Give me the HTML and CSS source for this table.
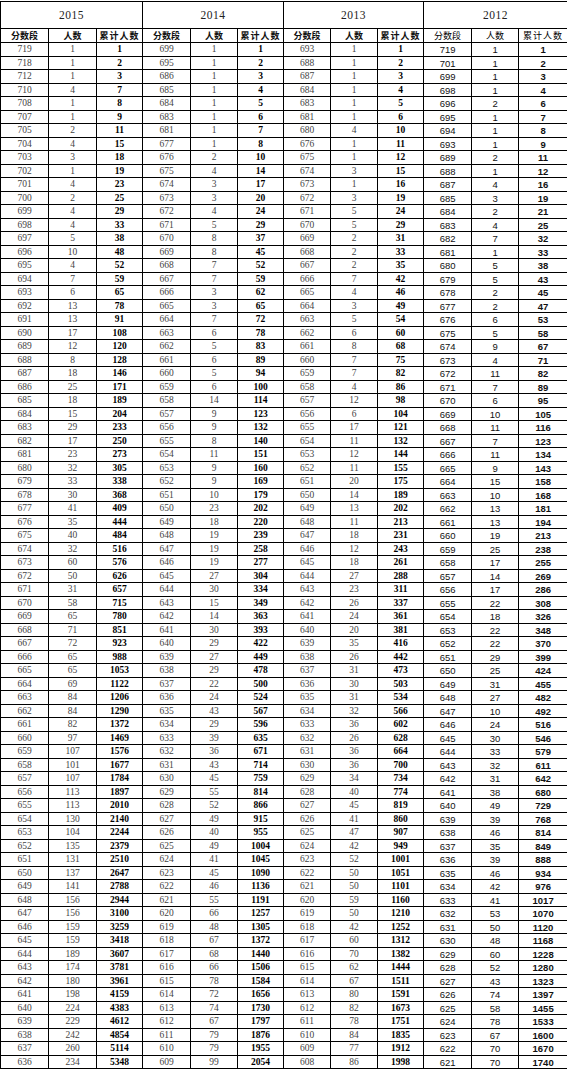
FILE: index.html
```html
<!DOCTYPE html>
<html lang="zh-CN">
<head>
<meta charset="utf-8">
<title>2012-2015 分数段统计</title>
<link rel="stylesheet" href="styles.css">
</head>
<body>
<table class="scores">
<colgroup>
<col class="w48"><col class="w48"><col class="w46">
<col class="w48"><col class="w47"><col class="w46">
<col class="w47"><col class="w47"><col class="w46">
<col class="w48"><col class="w47"><col class="w49">
</colgroup>
<thead>
<tr class="year-row"><th colspan="3">2015</th><th colspan="3">2014</th><th colspan="3">2013</th><th colspan="3" class="y2012">2012</th></tr>
<tr class="label-row">
<th>分数段</th><th>人数</th><th class="cum">累计人数</th>
<th>分数段</th><th>人数</th><th class="cum">累计人数</th>
<th>分数段</th><th>人数</th><th class="cum">累计人数</th>
<th class="light">分数段</th><th class="light">人数</th><th class="cum light">累计人数</th>
</tr>
</thead>
<tbody>
<tr><td>719</td><td>1</td><td>1</td><td>699</td><td>1</td><td>1</td><td>693</td><td>1</td><td>1</td><td>719</td><td>1</td><td>1</td></tr>
<tr><td>718</td><td>1</td><td>2</td><td>695</td><td>1</td><td>2</td><td>688</td><td>1</td><td>2</td><td>701</td><td>1</td><td>2</td></tr>
<tr><td>712</td><td>1</td><td>3</td><td>686</td><td>1</td><td>3</td><td>687</td><td>1</td><td>3</td><td>699</td><td>1</td><td>3</td></tr>
<tr><td>710</td><td>4</td><td>7</td><td>685</td><td>1</td><td>4</td><td>684</td><td>1</td><td>4</td><td>698</td><td>1</td><td>4</td></tr>
<tr><td>708</td><td>1</td><td>8</td><td>684</td><td>1</td><td>5</td><td>683</td><td>1</td><td>5</td><td>696</td><td>2</td><td>6</td></tr>
<tr><td>707</td><td>1</td><td>9</td><td>683</td><td>1</td><td>6</td><td>681</td><td>1</td><td>6</td><td>695</td><td>1</td><td>7</td></tr>
<tr><td>705</td><td>2</td><td>11</td><td>681</td><td>1</td><td>7</td><td>680</td><td>4</td><td>10</td><td>694</td><td>1</td><td>8</td></tr>
<tr><td>704</td><td>4</td><td>15</td><td>677</td><td>1</td><td>8</td><td>676</td><td>1</td><td>11</td><td>693</td><td>1</td><td>9</td></tr>
<tr><td>703</td><td>3</td><td>18</td><td>676</td><td>2</td><td>10</td><td>675</td><td>1</td><td>12</td><td>689</td><td>2</td><td>11</td></tr>
<tr><td>702</td><td>1</td><td>19</td><td>675</td><td>4</td><td>14</td><td>674</td><td>3</td><td>15</td><td>688</td><td>1</td><td>12</td></tr>
<tr><td>701</td><td>4</td><td>23</td><td>674</td><td>3</td><td>17</td><td>673</td><td>1</td><td>16</td><td>687</td><td>4</td><td>16</td></tr>
<tr><td>700</td><td>2</td><td>25</td><td>673</td><td>3</td><td>20</td><td>672</td><td>3</td><td>19</td><td>685</td><td>3</td><td>19</td></tr>
<tr><td>699</td><td>4</td><td>29</td><td>672</td><td>4</td><td>24</td><td>671</td><td>5</td><td>24</td><td>684</td><td>2</td><td>21</td></tr>
<tr><td>698</td><td>4</td><td>33</td><td>671</td><td>5</td><td>29</td><td>670</td><td>5</td><td>29</td><td>683</td><td>4</td><td>25</td></tr>
<tr><td>697</td><td>5</td><td>38</td><td>670</td><td>8</td><td>37</td><td>669</td><td>2</td><td>31</td><td>682</td><td>7</td><td>32</td></tr>
<tr><td>696</td><td>10</td><td>48</td><td>669</td><td>8</td><td>45</td><td>668</td><td>2</td><td>33</td><td>681</td><td>1</td><td>33</td></tr>
<tr><td>695</td><td>4</td><td>52</td><td>668</td><td>7</td><td>52</td><td>667</td><td>2</td><td>35</td><td>680</td><td>5</td><td>38</td></tr>
<tr><td>694</td><td>7</td><td>59</td><td>667</td><td>7</td><td>59</td><td>666</td><td>7</td><td>42</td><td>679</td><td>5</td><td>43</td></tr>
<tr><td>693</td><td>6</td><td>65</td><td>666</td><td>3</td><td>62</td><td>665</td><td>4</td><td>46</td><td>678</td><td>2</td><td>45</td></tr>
<tr><td>692</td><td>13</td><td>78</td><td>665</td><td>3</td><td>65</td><td>664</td><td>3</td><td>49</td><td>677</td><td>2</td><td>47</td></tr>
<tr><td>691</td><td>13</td><td>91</td><td>664</td><td>7</td><td>72</td><td>663</td><td>5</td><td>54</td><td>676</td><td>6</td><td>53</td></tr>
<tr><td>690</td><td>17</td><td>108</td><td>663</td><td>6</td><td>78</td><td>662</td><td>6</td><td>60</td><td>675</td><td>5</td><td>58</td></tr>
<tr><td>689</td><td>12</td><td>120</td><td>662</td><td>5</td><td>83</td><td>661</td><td>8</td><td>68</td><td>674</td><td>9</td><td>67</td></tr>
<tr><td>688</td><td>8</td><td>128</td><td>661</td><td>6</td><td>89</td><td>660</td><td>7</td><td>75</td><td>673</td><td>4</td><td>71</td></tr>
<tr><td>687</td><td>18</td><td>146</td><td>660</td><td>5</td><td>94</td><td>659</td><td>7</td><td>82</td><td>672</td><td>11</td><td>82</td></tr>
<tr><td>686</td><td>25</td><td>171</td><td>659</td><td>6</td><td>100</td><td>658</td><td>4</td><td>86</td><td>671</td><td>7</td><td>89</td></tr>
<tr><td>685</td><td>18</td><td>189</td><td>658</td><td>14</td><td>114</td><td>657</td><td>12</td><td>98</td><td>670</td><td>6</td><td>95</td></tr>
<tr><td>684</td><td>15</td><td>204</td><td>657</td><td>9</td><td>123</td><td>656</td><td>6</td><td>104</td><td>669</td><td>10</td><td>105</td></tr>
<tr><td>683</td><td>29</td><td>233</td><td>656</td><td>9</td><td>132</td><td>655</td><td>17</td><td>121</td><td>668</td><td>11</td><td>116</td></tr>
<tr><td>682</td><td>17</td><td>250</td><td>655</td><td>8</td><td>140</td><td>654</td><td>11</td><td>132</td><td>667</td><td>7</td><td>123</td></tr>
<tr><td>681</td><td>23</td><td>273</td><td>654</td><td>11</td><td>151</td><td>653</td><td>12</td><td>144</td><td>666</td><td>11</td><td>134</td></tr>
<tr><td>680</td><td>32</td><td>305</td><td>653</td><td>9</td><td>160</td><td>652</td><td>11</td><td>155</td><td>665</td><td>9</td><td>143</td></tr>
<tr><td>679</td><td>33</td><td>338</td><td>652</td><td>9</td><td>169</td><td>651</td><td>20</td><td>175</td><td>664</td><td>15</td><td>158</td></tr>
<tr><td>678</td><td>30</td><td>368</td><td>651</td><td>10</td><td>179</td><td>650</td><td>14</td><td>189</td><td>663</td><td>10</td><td>168</td></tr>
<tr><td>677</td><td>41</td><td>409</td><td>650</td><td>23</td><td>202</td><td>649</td><td>13</td><td>202</td><td>662</td><td>13</td><td>181</td></tr>
<tr><td>676</td><td>35</td><td>444</td><td>649</td><td>18</td><td>220</td><td>648</td><td>11</td><td>213</td><td>661</td><td>13</td><td>194</td></tr>
<tr><td>675</td><td>40</td><td>484</td><td>648</td><td>19</td><td>239</td><td>647</td><td>18</td><td>231</td><td>660</td><td>19</td><td>213</td></tr>
<tr><td>674</td><td>32</td><td>516</td><td>647</td><td>19</td><td>258</td><td>646</td><td>12</td><td>243</td><td>659</td><td>25</td><td>238</td></tr>
<tr><td>673</td><td>60</td><td>576</td><td>646</td><td>19</td><td>277</td><td>645</td><td>18</td><td>261</td><td>658</td><td>17</td><td>255</td></tr>
<tr><td>672</td><td>50</td><td>626</td><td>645</td><td>27</td><td>304</td><td>644</td><td>27</td><td>288</td><td>657</td><td>14</td><td>269</td></tr>
<tr><td>671</td><td>31</td><td>657</td><td>644</td><td>30</td><td>334</td><td>643</td><td>23</td><td>311</td><td>656</td><td>17</td><td>286</td></tr>
<tr><td>670</td><td>58</td><td>715</td><td>643</td><td>15</td><td>349</td><td>642</td><td>26</td><td>337</td><td>655</td><td>22</td><td>308</td></tr>
<tr><td>669</td><td>65</td><td>780</td><td>642</td><td>14</td><td>363</td><td>641</td><td>24</td><td>361</td><td>654</td><td>18</td><td>326</td></tr>
<tr><td>668</td><td>71</td><td>851</td><td>641</td><td>30</td><td>393</td><td>640</td><td>20</td><td>381</td><td>653</td><td>22</td><td>348</td></tr>
<tr><td>667</td><td>72</td><td>923</td><td>640</td><td>29</td><td>422</td><td>639</td><td>35</td><td>416</td><td>652</td><td>22</td><td>370</td></tr>
<tr><td>666</td><td>65</td><td>988</td><td>639</td><td>27</td><td>449</td><td>638</td><td>26</td><td>442</td><td>651</td><td>29</td><td>399</td></tr>
<tr><td>665</td><td>65</td><td>1053</td><td>638</td><td>29</td><td>478</td><td>637</td><td>31</td><td>473</td><td>650</td><td>25</td><td>424</td></tr>
<tr><td>664</td><td>69</td><td>1122</td><td>637</td><td>22</td><td>500</td><td>636</td><td>30</td><td>503</td><td>649</td><td>31</td><td>455</td></tr>
<tr><td>663</td><td>84</td><td>1206</td><td>636</td><td>24</td><td>524</td><td>635</td><td>31</td><td>534</td><td>648</td><td>27</td><td>482</td></tr>
<tr><td>662</td><td>84</td><td>1290</td><td>635</td><td>43</td><td>567</td><td>634</td><td>32</td><td>566</td><td>647</td><td>10</td><td>492</td></tr>
<tr><td>661</td><td>82</td><td>1372</td><td>634</td><td>29</td><td>596</td><td>633</td><td>36</td><td>602</td><td>646</td><td>24</td><td>516</td></tr>
<tr><td>660</td><td>97</td><td>1469</td><td>633</td><td>39</td><td>635</td><td>632</td><td>26</td><td>628</td><td>645</td><td>30</td><td>546</td></tr>
<tr><td>659</td><td>107</td><td>1576</td><td>632</td><td>36</td><td>671</td><td>631</td><td>36</td><td>664</td><td>644</td><td>33</td><td>579</td></tr>
<tr><td>658</td><td>101</td><td>1677</td><td>631</td><td>43</td><td>714</td><td>630</td><td>36</td><td>700</td><td>643</td><td>32</td><td>611</td></tr>
<tr><td>657</td><td>107</td><td>1784</td><td>630</td><td>45</td><td>759</td><td>629</td><td>34</td><td>734</td><td>642</td><td>31</td><td>642</td></tr>
<tr><td>656</td><td>113</td><td>1897</td><td>629</td><td>55</td><td>814</td><td>628</td><td>40</td><td>774</td><td>641</td><td>38</td><td>680</td></tr>
<tr><td>655</td><td>113</td><td>2010</td><td>628</td><td>52</td><td>866</td><td>627</td><td>45</td><td>819</td><td>640</td><td>49</td><td>729</td></tr>
<tr><td>654</td><td>130</td><td>2140</td><td>627</td><td>49</td><td>915</td><td>626</td><td>41</td><td>860</td><td>639</td><td>39</td><td>768</td></tr>
<tr><td>653</td><td>104</td><td>2244</td><td>626</td><td>40</td><td>955</td><td>625</td><td>47</td><td>907</td><td>638</td><td>46</td><td>814</td></tr>
<tr><td>652</td><td>135</td><td>2379</td><td>625</td><td>49</td><td>1004</td><td>624</td><td>42</td><td>949</td><td>637</td><td>35</td><td>849</td></tr>
<tr><td>651</td><td>131</td><td>2510</td><td>624</td><td>41</td><td>1045</td><td>623</td><td>52</td><td>1001</td><td>636</td><td>39</td><td>888</td></tr>
<tr><td>650</td><td>137</td><td>2647</td><td>623</td><td>45</td><td>1090</td><td>622</td><td>50</td><td>1051</td><td>635</td><td>46</td><td>934</td></tr>
<tr><td>649</td><td>141</td><td>2788</td><td>622</td><td>46</td><td>1136</td><td>621</td><td>50</td><td>1101</td><td>634</td><td>42</td><td>976</td></tr>
<tr><td>648</td><td>156</td><td>2944</td><td>621</td><td>55</td><td>1191</td><td>620</td><td>59</td><td>1160</td><td>633</td><td>41</td><td>1017</td></tr>
<tr><td>647</td><td>156</td><td>3100</td><td>620</td><td>66</td><td>1257</td><td>619</td><td>50</td><td>1210</td><td>632</td><td>53</td><td>1070</td></tr>
<tr><td>646</td><td>159</td><td>3259</td><td>619</td><td>48</td><td>1305</td><td>618</td><td>42</td><td>1252</td><td>631</td><td>50</td><td>1120</td></tr>
<tr><td>645</td><td>159</td><td>3418</td><td>618</td><td>67</td><td>1372</td><td>617</td><td>60</td><td>1312</td><td>630</td><td>48</td><td>1168</td></tr>
<tr><td>644</td><td>189</td><td>3607</td><td>617</td><td>68</td><td>1440</td><td>616</td><td>70</td><td>1382</td><td>629</td><td>60</td><td>1228</td></tr>
<tr><td>643</td><td>174</td><td>3781</td><td>616</td><td>66</td><td>1506</td><td>615</td><td>62</td><td>1444</td><td>628</td><td>52</td><td>1280</td></tr>
<tr><td>642</td><td>180</td><td>3961</td><td>615</td><td>78</td><td>1584</td><td>614</td><td>67</td><td>1511</td><td>627</td><td>43</td><td>1323</td></tr>
<tr><td>641</td><td>198</td><td>4159</td><td>614</td><td>72</td><td>1656</td><td>613</td><td>80</td><td>1591</td><td>626</td><td>74</td><td>1397</td></tr>
<tr><td>640</td><td>224</td><td>4383</td><td>613</td><td>74</td><td>1730</td><td>612</td><td>82</td><td>1673</td><td>625</td><td>58</td><td>1455</td></tr>
<tr><td>639</td><td>229</td><td>4612</td><td>612</td><td>67</td><td>1797</td><td>611</td><td>78</td><td>1751</td><td>624</td><td>78</td><td>1533</td></tr>
<tr><td>638</td><td>242</td><td>4854</td><td>611</td><td>79</td><td>1876</td><td>610</td><td>84</td><td>1835</td><td>623</td><td>67</td><td>1600</td></tr>
<tr><td>637</td><td>260</td><td>5114</td><td>610</td><td>79</td><td>1955</td><td>609</td><td>77</td><td>1912</td><td>622</td><td>70</td><td>1670</td></tr>
<tr><td>636</td><td>234</td><td>5348</td><td>609</td><td>99</td><td>2054</td><td>608</td><td>86</td><td>1998</td><td>621</td><td>70</td><td>1740</td></tr>
</tbody>
</table>
</body>
</html>
```

FILE: styles.css
```css
html, body {
  margin: 0;
  padding: 0;
  background: #fff;
}

.scores {
  border-collapse: collapse;
  table-layout: fixed;
  width: 567px;
  margin-top: 1px;
  font-family: "Liberation Serif", "Noto Sans CJK SC", serif;
  color: #333;
}

.w46 { width: 46px; }
.w47 { width: 47px; }
.w48 { width: 48px; }
.w49 { width: 49px; }

.scores th,
.scores td {
  border: 1px solid #000;
  padding: 0;
  text-align: center;
  vertical-align: middle;
  white-space: nowrap;
  overflow: hidden;
}

.year-row th {
  height: 26px;
  font-size: 11.5px;
  font-weight: normal;
  color: #222;
  letter-spacing: 0.5px;
}

.label-row th {
  height: 13px;
  font-family: "Noto Sans CJK SC", sans-serif;
  font-size: 9px;
  line-height: 10px;
  font-weight: bold;
  color: #111;
}

.label-row th.cum {
  letter-spacing: 1px;
}

.label-row th.light {
  font-weight: normal;
  color: #000;
}

.scores tbody tr {
  height: 13.5px;
}

.scores tbody td {
  height: 12.5px;
  font-size: 9.5px;
  line-height: 10px;
  color: #444;
}

.scores tbody td:nth-child(3n) {
  font-weight: bold;
  color: #000;
}

.scores tbody td:nth-child(n+10) {
  font-family: "Liberation Sans", sans-serif;
  font-size: 9.5px;
  color: #111;
  padding-top: 2px;
  height: 10.5px;
}
```
